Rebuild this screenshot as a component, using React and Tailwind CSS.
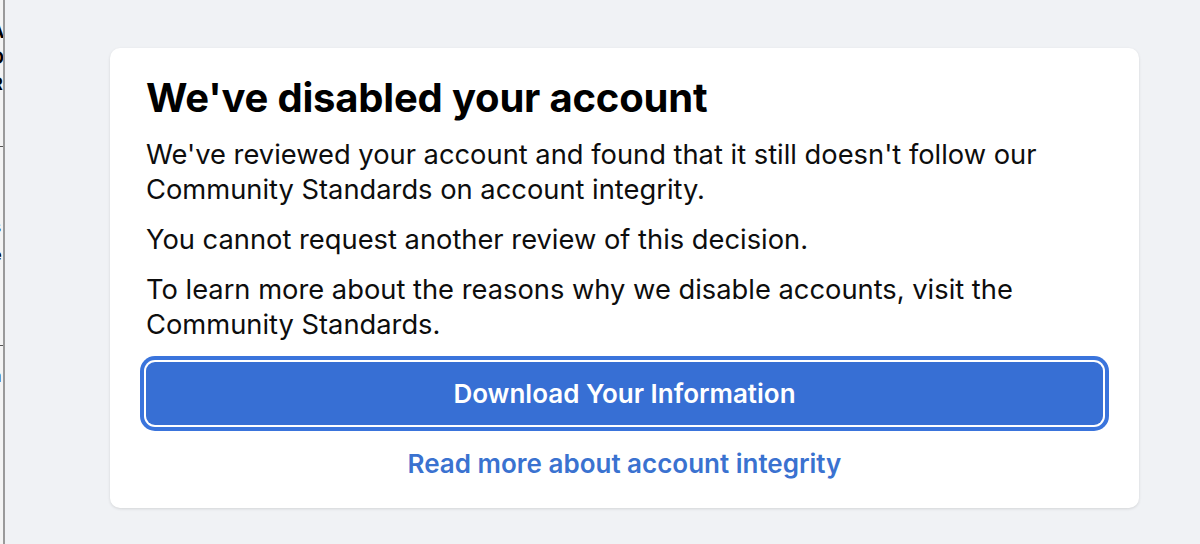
import React from 'react';

const edgeBits = [
  { top: 'mt-[22px]', ch: 'A' },
  { top: 'mt-[6px]', ch: 'D' },
  { top: 'mt-[6px]', ch: 'R' },
];

export default function App() {
  return (
    <div className="w-[1200px] h-[544px] flex bg-[#f0f2f5] overflow-hidden font-['Inter','Liberation_Sans',sans-serif]">
      {/* Clipped window edge on the far left */}
      <div className="w-[3px] shrink-0 bg-[#f4f4f4] overflow-hidden flex flex-col text-[18px] font-bold leading-[20px] text-black">
        {edgeBits.map((b, i) => (
          <span key={i} className={`${b.top} -ml-[9px]`}>{b.ch}</span>
        ))}
        <div className="mt-[52px] h-px w-full bg-[#555]" />
        <span className="mt-[12px] -ml-[9px]">l</span>
        <span className="mt-[8px] -ml-[9px]">t</span>
        <span className="mt-[10px] -ml-[9px]">s</span>
        <span className="mt-[8px] -ml-[9px]">e</span>
        <div className="mt-[80px] h-px w-full bg-[#555]" />
        <span className="mt-[20px] -ml-[9px]">a</span>
        <span className="mt-[6px] -ml-[9px]">I</span>
        <span className="mt-[6px] -ml-[9px]">l</span>
        <span className="mt-[10px] -ml-[9px]">r</span>
      </div>
      <div className="w-[2px] shrink-0 bg-[#9a9a9a]" />

      <div className="flex-1 pl-[105px] pt-[48px]">
        <div className="w-[1029px] h-[460px] bg-white rounded-[10px] shadow-[0_1px_3px_rgba(0,0,0,0.12)] px-[36px] pt-[26px] flex flex-col">
          <h1 className="text-[40px] font-bold text-black leading-[48px] tracking-[-0.2px]">
            We've disabled your account
          </h1>
          <div className="mt-[15px] text-[27.3px] leading-[35px] text-[#0d0d0d] flex flex-col gap-[15px]">
            <p>
              We've reviewed your account and found that it still doesn't follow our
              <br />
              Community Standards on account integrity.
            </p>
            <p>You cannot request another review of this decision.</p>
            <p>
              To learn more about the reasons why we disable accounts, visit the
              <br />
              Community Standards.
            </p>
          </div>
          <button className="mt-[20px] h-[63px] w-full shrink-0 rounded-[9px] bg-[#376fd4] text-white text-[26px] font-semibold shadow-[0_0_0_2px_#ffffff,0_0_0_6px_#3a74dc]">
            Download Your Information
          </button>
          <a href="#" className="mt-[24px] self-center text-[26px] font-semibold text-[#3a72d0] leading-[30px]">
            Read more about account integrity
          </a>
        </div>
      </div>
    </div>
  );
}
